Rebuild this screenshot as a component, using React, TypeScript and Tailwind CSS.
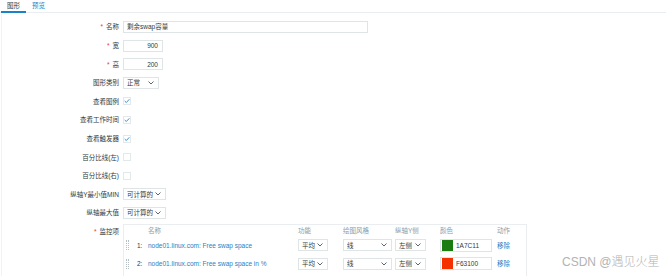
import React from 'react';

const labelCls = 'text-[#2f3a40]';

function Chevron() {
  return (
    <svg width="6" height="4" viewBox="0 0 6 4" className="shrink-0">
      <polyline points="0.5,0.5 3,3 5.5,0.5" fill="none" stroke="#5a666d" strokeWidth="1" />
    </svg>
  );
}

function Select({ value, width }: { value: string; width: string }) {
  return (
    <div className={`flex h-[12px] items-center justify-between border border-[#dfe4e7] bg-white pl-[3px] pr-[4px] ${width}`}>
      <span className="text-[#2f3a40]">{value}</span>
      <Chevron />
    </div>
  );
}

function Check({ on }: { on?: boolean }) {
  return (
    <div className="flex h-[8px] w-[8px] items-center justify-center border border-[#e3e8eb] bg-white">
      {on && (
        <svg width="7" height="6" viewBox="0 0 7 6">
          <polyline points="0.8,3 2.7,4.8 6.2,1" fill="none" stroke="#2a8ad0" strokeWidth="1.1" />
        </svg>
      )}
    </div>
  );
}

function Row({ label, required, children }: { label: string; required?: boolean; children: React.ReactNode }) {
  return (
    <div className="flex h-[18.6px] items-center">
      <div className={`w-[117px] text-right ${labelCls}`}>
        {required && <span className="mr-[3px] text-[#e33734]">*</span>}
        {label}
      </div>
      <div className="ml-[4px] flex items-center">{children}</div>
    </div>
  );
}

const items = [
  { n: '1:', name: 'node01.linux.com: Free swap space', color: '#1A7C11', hex: '1A7C11' },
  { n: '2:', name: 'node01.linux.com: Free swap space in %', color: '#F63100', hex: 'F63100' },
];

export default function App() {
  return (
    <div className="relative h-[276px] w-[666px] overflow-hidden bg-white font-['Liberation_Sans','Noto_Sans_CJK_SC',sans-serif] text-[6.5px] leading-[9px]">
      {/* tabs */}
      <div className="flex h-[13px] border-b border-[#ebeef0] pl-[1px]">
        <div className="flex h-[13px] items-start border-b-2 border-[#1a82c6] px-[6px] pt-[1px] text-[#2f3a40]">图形</div>
        <div className="flex h-[13px] items-start px-[6px] pt-[1px] text-[#2a80c4]">预览</div>
      </div>

      <div className="ml-[1px] border-l border-[#f0f2f4] pt-[4.7px] pb-[10px]">
        <Row label="名称" required>
          <div className="flex h-[12px] w-[245px] items-center border border-[#dfe4e7] px-[3px] text-[#2f3a40]">剩余swap容量</div>
        </Row>
        <Row label="宽" required>
          <div className="flex h-[12px] w-[40px] items-center justify-end border border-[#dfe4e7] px-[4px] text-[#2f3a40]">900</div>
        </Row>
        <Row label="高" required>
          <div className="flex h-[12px] w-[40px] items-center justify-end border border-[#dfe4e7] px-[4px] text-[#2f3a40]">200</div>
        </Row>
        <Row label="图形类别">
          <Select value="正常" width="w-[36px]" />
        </Row>
        <Row label="查看图例">
          <Check on />
        </Row>
        <Row label="查看工作时间">
          <Check on />
        </Row>
        <Row label="查看触发器">
          <Check on />
        </Row>
        <Row label="百分比线(左)">
          <Check />
        </Row>
        <Row label="百分比线(右)">
          <Check />
        </Row>
        <Row label="纵轴Y最小值MIN">
          <Select value="可计算的" width="w-[43px]" />
        </Row>
        <Row label="纵轴最大值">
          <Select value="可计算的" width="w-[43px]" />
        </Row>

        <div className="flex items-start">
          <div className={`w-[117px] pt-[4.5px] text-right ${labelCls}`}>
            <span className="mr-[3px] text-[#e33734]">*</span>监控项
          </div>
          <div className="ml-[4px] mt-[1.7px] h-[62px] w-[404px] border border-[#ebeef0] pl-[2px] pt-[1px]">
            <div className="grid h-[10px] grid-cols-[11px_11px_150px_45px_52px_45px_57px_1fr] items-center text-[#8a9ba4]">
              <div />
              <div />
              <div>名称</div>
              <div>功能</div>
              <div>绘图风格</div>
              <div>纵轴Y侧</div>
              <div>颜色</div>
              <div>动作</div>
            </div>
            {items.map((it) => (
              <div key={it.n} className="grid h-[18.6px] grid-cols-[11px_11px_150px_45px_52px_45px_57px_1fr] items-center">
                <div className="flex h-[10px] w-[4px] gap-[1px]">
                  <div className="w-[1px] border-l border-dotted border-[#b5c0c6]" />
                  <div className="w-[1px] border-l border-dotted border-[#b5c0c6]" />
                </div>
                <div className="text-[#2f3a40]">{it.n}</div>
                <div className="text-[#2a80c4]">{it.name}</div>
                <Select value="平均" width="w-[30px]" />
                <Select value="线" width="w-[49px]" />
                <Select value="左侧" width="w-[31px]" />
                <div className="flex h-[13px] w-[52px] items-center gap-[3px] border border-[#dfe4e7] pl-[1px] text-[#2f3a40]">
                  <div className="h-[11px] w-[11px]" style={{ backgroundColor: it.color }} />
                  <span>{it.hex}</span>
                </div>
                <div className="text-[#2a80c4]">移除</div>
              </div>
            ))}
          </div>
        </div>
      </div>

      {/* watermark */}
      <div className="absolute left-[562px] top-[255px] text-[12px] font-light leading-[14px] text-[#b3b3b3]">CSDN @遇见火星</div>
    </div>
  );
}
